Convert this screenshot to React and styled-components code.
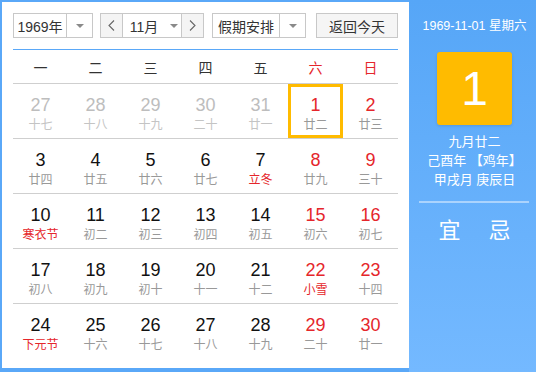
import React from "react";
import styled, { createGlobalStyle } from "styled-components";

const Global = createGlobalStyle`
  html, body { margin: 0; padding: 0; background: #fff; }
  body { font-family: "Liberation Sans", "Noto Sans CJK SC", sans-serif; }
  * { box-sizing: border-box; }
`;

const Frame = styled.div`
  width: 536px;
  height: 372px;
  display: flex;
  background: #5aa8f8;
  overflow: hidden;
`;

const Main = styled.div`
  width: 407px;
  margin: 2px 0 4px 2px;
  background: #fff;
  padding: 11px 11px 0 11px;
  display: flex;
  flex-direction: column;
`;

const Toolbar = styled.div`
  display: flex;
  align-items: center;
  height: 25px;
  gap: 7px;
  margin-bottom: 11px;
`;

const Select = styled.div`
  display: flex;
  height: 25px;
  width: ${(p) => p.$w}px;
  border: 1px solid #c8c8c8;
  background: #fff;
  font-size: 14px;
  color: #333;
  margin-left: ${(p) => p.$ml || 0}px;
`;

const SelText = styled.div`
  flex: 1;
  display: flex;
  align-items: center;
  justify-content: center;
  border-right: 1px solid #c8c8c8;
`;

const SelArrow = styled.div`
  width: 25px;
  display: flex;
  align-items: center;
  justify-content: center;
`;

const Tri = styled.span`
  width: 0;
  height: 0;
  border-left: 4px solid transparent;
  border-right: 4px solid transparent;
  border-top: 4px solid #8a8a8a;
  margin-left: ${(p) => p.$ml || 0}px;
`;

const NavBtn = styled.div`
  width: 22px;
  display: flex;
  align-items: center;
  justify-content: center;
  background: #f4f4f4;
  color: #666;
  border-left: ${(p) => (p.$side === "r" ? "1px solid #c8c8c8" : "none")};
  border-right: ${(p) => (p.$side === "l" ? "1px solid #c8c8c8" : "none")};
`;

const MonthText = styled.div`
  flex: 1;
  display: flex;
  align-items: center;
  justify-content: center;
  padding-left: 4px;
`;

const Button = styled.div`
  margin-left: auto;
  width: 82px;
  height: 25px;
  border: 1px solid #c8c8c8;
  background: #f5f5f5;
  font-size: 14px;
  color: #333;
  display: flex;
  align-items: center;
  justify-content: center;
`;

const Grid = styled.div`
  display: grid;
  grid-template-columns: repeat(7, 55px);
  border-top: 1px solid #5aa8f8;
`;

const Head = styled.div`
  height: 34px;
  border-bottom: 1px solid #cfcfcf;
  display: flex;
  align-items: center;
  justify-content: center;
  font-size: 14px;
  color: ${(p) => (p.$red ? "#e5262b" : "#333")};
`;

const Cell = styled.div`
  height: 55px;
  border-bottom: ${(p) => (p.$last ? "none" : "1px solid #cfcfcf")};
  display: flex;
  flex-direction: column;
  align-items: center;
  padding-top: 11px;
  box-shadow: ${(p) => (p.$sel ? "inset 0 0 0 3px #ffbb00" : "none")};
`;

const Num = styled.div`
  font-size: 18px;
  line-height: 20px;
  color: ${(p) => (p.$faded ? "#bdbdbd" : p.$red ? "#e5262b" : "#111")};
`;

const Lunar = styled.div`
  font-size: 12px;
  line-height: 16px;
  margin-top: 2px;
  color: ${(p) => (p.$faded ? "#c4c4c4" : p.$red ? "#e5262b" : "#999")};
`;

const Side = styled.div`
  flex: 1;
  background: linear-gradient(#56a6f7, #74b9ff);
  display: flex;
  flex-direction: column;
  align-items: center;
  color: #fff;
  padding: 18px 0 0 4px;
`;

const SideDate = styled.div`
  font-size: 12.5px;
  line-height: 16px;
  white-space: nowrap;
`;

const BigDay = styled.div`
  margin-top: 18px;
  width: 75px;
  height: 73px;
  background: #ffbb00;
  border-radius: 3px;
  display: flex;
  align-items: center;
  justify-content: center;
  font-size: 48px;
  color: #fff;
  box-shadow: 0 1px 3px rgba(0, 0, 0, 0.12);
`;

const Info = styled.div`
  margin-top: 7px;
  font-size: 13px;
  line-height: 19px;
  text-align: center;
  white-space: nowrap;
`;

const Divider = styled.div`
  align-self: stretch;
  margin: 12px 7px 0 6px;
  height: 2px;
  background: rgba(255, 255, 255, 0.45);
`;

const YiJi = styled.div`
  margin-top: 15px;
  display: flex;
  gap: 28px;
  font-size: 22px;
  line-height: 26px;
`;

const Chevron = ({ dir }) => (
  <svg width="7" height="11" viewBox="0 0 7 11">
    <path
      d={dir === "l" ? "M6 0.5 L1 5.5 L6 10.5" : "M1 0.5 L6 5.5 L1 10.5"}
      fill="none"
      stroke="#666"
      strokeWidth="1.1"
    />
  </svg>
);

const weekdays = ["一", "二", "三", "四", "五", "六", "日"];

const rows = [
  [["27", "十七", 1], ["28", "十八", 1], ["29", "十九", 1], ["30", "二十", 1], ["31", "廿一", 1], ["1", "廿二", 0, 0, 1], ["2", "廿三"]],
  [["3", "廿四"], ["4", "廿五"], ["5", "廿六"], ["6", "廿七"], ["7", "立冬", 0, 1], ["8", "廿九"], ["9", "三十"]],
  [["10", "寒衣节", 0, 1], ["11", "初二"], ["12", "初三"], ["13", "初四"], ["14", "初五"], ["15", "初六"], ["16", "初七"]],
  [["17", "初八"], ["18", "初九"], ["19", "初十"], ["20", "十一"], ["21", "十二"], ["22", "小雪", 0, 1], ["23", "十四"]],
  [["24", "下元节", 0, 1], ["25", "十六"], ["26", "十七"], ["27", "十八"], ["28", "十九"], ["29", "二十"], ["30", "廿一"]],
];

export default function App() {
  return (
    <>
      <Global />
      <Frame>
        <Main>
          <Toolbar>
            <Select $w={80}>
              <SelText>1969年</SelText>
              <SelArrow><Tri /></SelArrow>
            </Select>
            <Select $w={104}>
              <NavBtn $side="l"><Chevron dir="l" /></NavBtn>
              <MonthText>11月<Tri $ml={12} /></MonthText>
              <NavBtn $side="r"><Chevron dir="r" /></NavBtn>
            </Select>
            <Select $w={94} $ml={1}>
              <SelText>假期安排</SelText>
              <SelArrow><Tri /></SelArrow>
            </Select>
            <Button>返回今天</Button>
          </Toolbar>
          <Grid>
            {weekdays.map((w, i) => (
              <Head key={w} $red={i >= 5}>{w}</Head>
            ))}
            {rows.map((r, ri) =>
              r.map(([n, l, faded, redLunar, sel], ci) => {
                const weekend = ci >= 5 && !faded;
                return (
                  <Cell key={`${ri}-${ci}`} $last={ri === rows.length - 1} $sel={!!sel}>
                    <Num $faded={!!faded} $red={weekend}>{n}</Num>
                    <Lunar $faded={!!faded} $red={!!redLunar}>{l}</Lunar>
                  </Cell>
                );
              })
            )}
          </Grid>
        </Main>
        <Side>
          <SideDate>1969-11-01 星期六</SideDate>
          <BigDay>1</BigDay>
          <Info>
            九月廿二<br />
            己酉年 【鸡年】<br />
            甲戌月 庚辰日
          </Info>
          <Divider />
          <YiJi>
            <span>宜</span>
            <span>忌</span>
          </YiJi>
        </Side>
      </Frame>
    </>
  );
}
